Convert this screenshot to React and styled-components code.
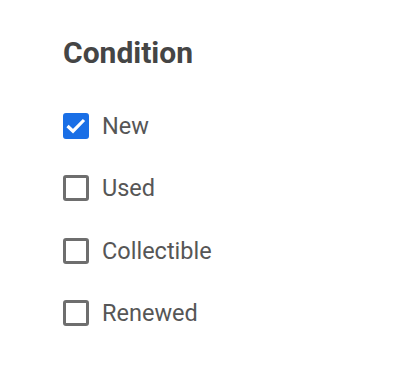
import React, { useState } from 'react';
import styled, { createGlobalStyle } from 'styled-components';

const GlobalStyle = createGlobalStyle`
  body {
    margin: 0;
    background: #fff;
    font-family: Roboto, "Liberation Sans", sans-serif;
  }
`;

const Panel = styled.section`
  padding: 35px 0 0 63px;
  display: flex;
  flex-direction: column;
`;

const Title = styled.h2`
  margin: 0 0 42px;
  font-size: 30px;
  line-height: 36px;
  font-weight: 700;
  color: #454545;
`;

const List = styled.div`
  display: flex;
  flex-direction: column;
  gap: 36.3px;
`;

const Row = styled.label`
  display: flex;
  align-items: center;
  gap: 13px;
  height: 26px;
  cursor: pointer;
`;

const Box = styled.span`
  box-sizing: border-box;
  flex: none;
  width: 26px;
  height: 26px;
  border-radius: 3px;
  border: 3px solid ${props => (props.checked ? '#1a6fe6' : '#6e6e6e')};
  background: ${props => (props.checked ? '#1a6fe6' : '#fff')};
  display: flex;
  align-items: center;
  justify-content: center;
`;

const Label = styled.span`
  font-size: 23.5px;
  line-height: 28px;
  color: #565656;
`;

const options = ['New', 'Used', 'Collectible', 'Renewed'];

const App = () => {
  const [selected, setSelected] = useState(['New']);

  const toggle = (name) => {
    setSelected(prev =>
      prev.includes(name) ? prev.filter(n => n !== name) : [...prev, name]
    );
  };

  return (
    <>
      <GlobalStyle />
      <Panel>
        <Title>Condition</Title>
        <List>
          {options.map(name => {
            const checked = selected.includes(name);
            return (
              <Row key={name} onClick={() => toggle(name)}>
                <Box checked={checked}>
                  {checked && (
                    <svg width="22" height="22" viewBox="0 0 22 22" style={{ flex: 'none' }}>
                      <path d="M2.5 11 L8 16.2 L19 5" fill="none" stroke="#fff" strokeWidth="3.2" />
                    </svg>
                  )}
                </Box>
                <Label>{name}</Label>
              </Row>
            );
          })}
        </List>
      </Panel>
    </>
  );
};

export default App;
